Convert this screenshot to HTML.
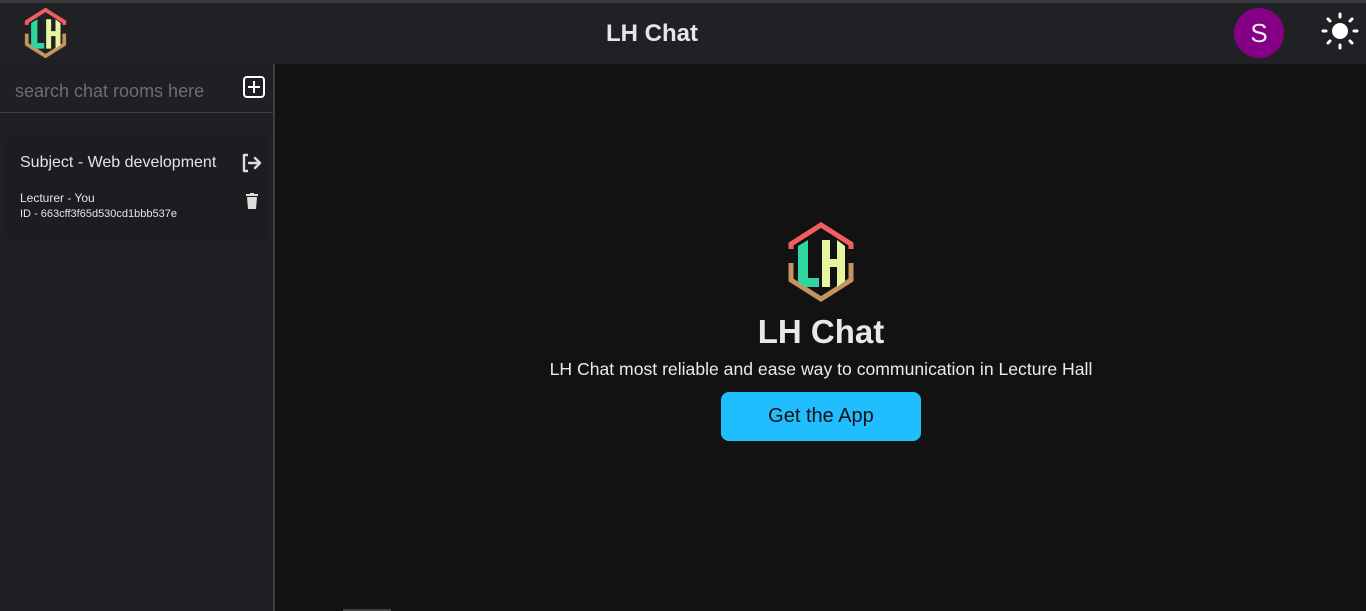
<!DOCTYPE html>
<html><head><meta charset="utf-8"><style>
*{box-sizing:border-box;margin:0;padding:0}
body{width:1366px;height:611px;overflow:hidden;background:#121212;font-family:"Liberation Sans",sans-serif;color:#e8e8e8;position:relative}
.topline{position:absolute;left:0;top:0;width:1366px;height:3px;background:#3a3b3e}
.header{position:absolute;left:0;top:3px;width:1366px;height:61px;background:#202124}
.title{position:absolute;left:0;width:1304px;top:17px;text-align:center;font-weight:bold;font-size:24px;color:#e6e6e6}
.avatar{position:absolute;left:1234px;top:5px;width:50px;height:50px;border-radius:50%;background:#850085;color:#ececec;font-size:26px;text-align:center;line-height:50px}
.side{position:absolute;left:0;top:64px;width:273px;height:547px;background:#1f2023}
.sb{position:absolute;left:273px;top:64px;width:2px;height:547px;background:#3c3d40}
.search{position:absolute;left:15px;top:81px;font-size:18px;color:#6d6e70}
.hr{position:absolute;left:0;top:112px;width:273px;height:1px;background:#3f4043}
.card{position:absolute;left:6px;top:137px;width:262px;height:104px;background:#1c1d20;border-radius:6px}
.subj{position:absolute;left:14px;top:17px;font-size:16px;color:#e4e4e4}
.small{position:absolute;left:14px;font-size:12px;color:#e4e4e4}
.sub{position:absolute;left:0;width:1642px;top:359px;text-align:center;font-size:17.6px;color:#eaeaea}
.big{position:absolute;left:0;width:1642px;top:313px;text-align:center;font-size:33px;font-weight:bold;color:#e8e8e8}
.btn{position:absolute;left:721px;top:392px;width:200px;height:49px;border-radius:8px;background:#20bdff;color:#111;font-size:20px;text-align:center;line-height:49px}
</style></head><body>
<div class="topline"></div>
<div class="header">
<svg style="position:absolute;left:24px;top:5px" width="43" height="50" viewBox="0 0 68 80">
<path d="M4,27 L4,22 L34,3 L64,22 L64,27" fill="none" stroke="#f25e60" stroke-width="6"/>
<path d="M4,41 L4,58 L34,77 L64,58 L64,41" fill="none" stroke="#c4935f" stroke-width="6"/>
<polygon points="11,24 21,18 21,56 32,56 32,65 18,65 11,60" fill="#2fd6a0"/>
<polygon points="35,18 43,18 43,37 50,37 50,18 58,24 58,59 50,65 50,45 43,45 43,65 35,65" fill="#e8f5a0"/>
</svg>
<div class="title">LH Chat</div>
<div class="avatar">S</div>
<svg style="position:absolute;left:1321px;top:9px" width="38" height="38" viewBox="0 0 38 38">
<circle cx="19" cy="19" r="8" fill="#fff"/>
<g stroke="#fff" stroke-width="3" stroke-linecap="round">
<line x1="19" y1="2" x2="19" y2="5"/><line x1="19" y1="33" x2="19" y2="36"/>
<line x1="2" y1="19" x2="5" y2="19"/><line x1="33" y1="19" x2="36" y2="19"/>
<line x1="7" y1="7" x2="9" y2="9"/><line x1="29" y1="29" x2="31" y2="31"/>
<line x1="7" y1="31" x2="9" y2="29"/><line x1="29" y1="9" x2="31" y2="7"/>
</g></svg>
</div>
<div class="side"></div><div class="sb"></div>
<div class="search">search chat rooms here</div>
<svg style="position:absolute;left:243px;top:76px" width="22" height="22" viewBox="0 0 22 22">
<rect x="1" y="1" width="20" height="20" rx="3" fill="none" stroke="#fff" stroke-width="2"/>
<path d="M11 5V17M5 11H17" stroke="#fff" stroke-width="2"/></svg>
<div class="hr"></div>
<div class="card">
<div class="subj">Subject - Web development</div>
<div class="small" style="top:54px">Lecturer - You</div>
<div class="small" style="top:71px;font-size:11px">ID - 663cff3f65d530cd1bbb537e</div>
</div>
<svg style="position:absolute;left:241px;top:153px" width="22" height="20" viewBox="0 0 22 20">
<path d="M7 2H3V18H7" fill="none" stroke="#ddd" stroke-width="2.4" stroke-linejoin="round"/>
<path d="M8 10H19M14 5L19 10L14 15" fill="none" stroke="#ddd" stroke-width="2.4" stroke-linecap="round" stroke-linejoin="round"/></svg>
<svg style="position:absolute;left:245px;top:193px" width="14" height="16" viewBox="0 0 14 16">
<rect x="1" y="1" width="12" height="2" fill="#ddd"/><rect x="5" y="0" width="4" height="2" fill="#ddd"/>
<path d="M2 4H12L11 16H3Z" fill="#ddd"/></svg>
<svg style="position:absolute;left:787px;top:222px" width="68" height="80" viewBox="0 0 68 80">
<path d="M4,27 L4,22 L34,3 L64,22 L64,27" fill="none" stroke="#f25e60" stroke-width="5"/>
<path d="M4,41 L4,58 L34,77 L64,58 L64,41" fill="none" stroke="#c4935f" stroke-width="5"/>
<polygon points="11,24 21,18 21,56 32,56 32,65 18,65 11,60" fill="#2fd6a0"/>
<polygon points="35,18 43,18 43,37 50,37 50,18 58,24 58,59 50,65 50,45 43,45 43,65 35,65" fill="#e8f5a0"/>
</svg>
<div class="big">LH Chat</div>
<div class="sub">LH Chat most reliable and ease way to communication in Lecture Hall</div>
<div class="btn">Get the App</div>
<div style="position:absolute;left:343px;top:609px;width:48px;height:2px;background:#444"></div>
</body></html>
